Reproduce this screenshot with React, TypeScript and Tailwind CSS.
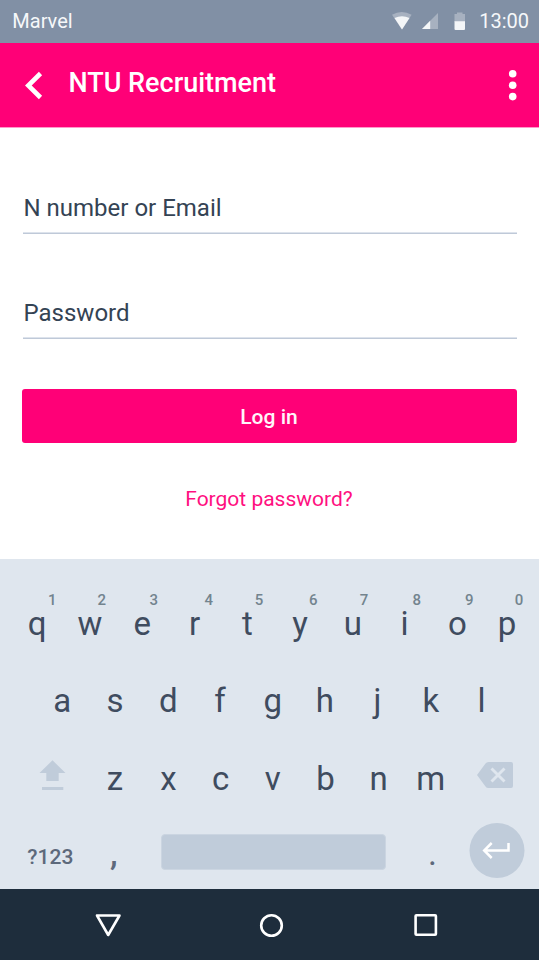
import React from "react";

type Key = [label: string, center: number];

const digits: Key[] = [["1", 52.3], ["2", 101.8], ["3", 153.7], ["4", 208.7], ["5", 259], ["6", 313.3], ["7", 364], ["8", 416.8], ["9", 469.2], ["0", 519]];
const top: Key[] = [["q", 37.2], ["w", 90], ["e", 142.2], ["r", 194.7], ["t", 247.3], ["y", 300], ["u", 353], ["i", 404.5], ["o", 457.5], ["p", 507]];
const home: Key[] = [["a", 62.3], ["s", 115], ["d", 168.3], ["f", 220], ["g", 272.7], ["h", 325], ["j", 377.5], ["k", 431], ["l", 481.5]];
const bottom: Key[] = [["z", 115], ["x", 168.5], ["c", 220.7], ["v", 272.7], ["b", 325.5], ["n", 378.5], ["m", 430.7]];

function Keys({ keys, start = 0, className }: { keys: Key[]; start?: number; className: string }) {
  return (
    <div className={`flex ${className}`}>
      {keys.map(([label, center], i) => (
        <span
          key={label}
          className="flex w-0 justify-center"
          style={{ marginLeft: center - (i ? keys[i - 1][1] : start) }}
        >
          {label}
        </span>
      ))}
    </div>
  );
}

function StatusBar() {
  return (
    <div className="flex h-[43px] items-center bg-[#8190a5] pr-[10px] pl-[12.300px] text-[20px] leading-[43px] text-[#f6f8fa]">
      <span className="flex-1">Marvel</span>
      <svg className="h-[43px] w-[88px]" viewBox="391 0 88 43">
        <path d="M392 14.8Q401.700 9 411.600 14.800L402 29.500Z" fill="#a7b1c0" />
        <path d="M394.500 18Q402 14.500 409.500 18L402 29.500Z" fill="#f4f6f8" />
        <path d="M422 29L438 13V29Z" fill="#a7b1c0" />
        <path d="M422 29L430.200 20.800V29Z" fill="#f4f6f8" />
        <path d="M454.500 14H457V12.500H462.500V14H465V22H454.500Z" fill="#a7b1c0" />
        <path d="M454.500 21.300H465V29Q465 30 464 30H455.500Q454.500 30 454.500 29Z" fill="#f4f6f8" />
      </svg>
      <span>13:00</span>
    </div>
  );
}

function AppBar() {
  return (
    <header className="flex h-[85px] items-start border-b border-[#ff99c9] bg-[#ff0077] text-white">
      <svg className="h-[84px] w-[68.500px]" viewBox="0 43 68.500 84">
        <path d="M40.500 73.500L28.300 85.500L40.500 97.500" fill="none" stroke="currentColor" strokeWidth="4.600" />
      </svg>
      <h1 className="mt-[20px] flex-1 text-[27px] leading-[40px] font-medium">NTU Recruitment</h1>
      <svg className="h-[84px] w-[40px]" viewBox="499 43 40 84" fill="currentColor">
        <circle cx="512.700" cy="73.700" r="3.800" />
        <circle cx="512.700" cy="85.200" r="3.800" />
        <circle cx="512.700" cy="96.600" r="3.800" />
      </svg>
    </header>
  );
}

function Field({ label }: { label: string }) {
  return (
    <div className="mr-[22px] ml-[23px] h-[54px] border-b border-[#bfc9d8] text-[#344354]">
      <div className="h-[53px] border-b border-[#dde3ec] pl-[0.500px] text-[24px] leading-[56px]">{label}</div>
    </div>
  );
}

function Keyboard() {
  return (
    <section className="h-[330px] overflow-hidden bg-[#dfe6ee] text-[#3f4c5f]">
      <Keys keys={digits} className="mt-[34px] h-[14px] text-[15px] leading-[14px] font-medium text-[#73848e]" />
      <Keys keys={top} className="mt-[-3px] h-[40px] text-[33px] leading-[40px]" />
      <Keys keys={home} className="mt-[37px] h-[40px] text-[33px] leading-[40px]" />
      <div className="mt-[38px] flex h-[40px]">
        <svg className="h-[40px] w-[80px]" viewBox="0 759 80 40" fill="#c0ccda">
          <path d="M52.500 760.300L65.500 773H58.700V781H46.300V773H39.500Z" />
          <path d="M42 787H63.300V790H42Z" />
        </svg>
        <Keys keys={bottom} start={80} className="w-[390px] text-[33px] leading-[40px]" />
        <svg className="h-[40px] w-[60px]" viewBox="470 759 60 40">
          <path d="M477 775L485.500 763.500Q486.500 762 488.500 762H511Q513 762 513 764V786Q513 788 511 788H488.500Q486.500 788 485.500 786.500Z" fill="#c0ccda" />
          <path d="M491.500 768.500L504.500 781.500M504.500 768.500L491.500 781.500" stroke="#dfe6ee" strokeWidth="2.900" />
        </svg>
      </div>
      <div className="mt-[24px] flex h-[55px] items-start text-[#5d697b]">
        <span className="mt-[18px] ml-[27.300px] w-[82.700px] text-[21px] leading-[32px] font-medium">?123</span>
        <span className="mt-[10px] w-[50.600px] text-[34px] leading-[40px] font-medium">,</span>
        <div className="mt-[11px] h-[36px] w-[225.400px] rounded-[4px] border border-[#cbd5e1] bg-[#c0ccda]" />
        <span className="mt-[10px] ml-[42px] w-[41px] text-[34px] leading-[40px]">.</span>
        <svg className="h-[55px] w-[56px]" viewBox="469 823 56 55">
          <circle cx="497" cy="850.500" r="27.500" fill="#c0ccda" />
          <path d="M508.500 843V850.500H484.500M491.700 843L484.200 850.500L491.700 858" fill="none" stroke="white" strokeWidth="2.500" />
        </svg>
      </div>
    </section>
  );
}

function NavigationBar() {
  return (
    <nav className="h-[71px] bg-[#1e2d3c]">
      <svg className="h-[71px] w-[539px]" viewBox="0 889 539 71" fill="none" stroke="white" strokeWidth="2.600">
        <path d="M97 915.500H119.500L108.200 935Z" strokeLinejoin="round" />
        <circle cx="271.500" cy="925.500" r="10.300" />
        <rect x="415.600" y="915.300" width="20.300" height="19.400" rx=".8" />
      </svg>
    </nav>
  );
}

export default function App() {
  return (
    <div className="flex h-[960px] w-[539px] flex-col overflow-hidden bg-white font-[Roboto,sans-serif]">
      <StatusBar />
      <AppBar />
      <main className="flex h-[431px] flex-col">
        <div className="mt-[52px]"><Field label="N number or Email" /></div>
        <div className="mt-[51px]"><Field label="Password" /></div>
        <button className="mt-[50px] mr-[22px] ml-[22px] h-[54px] rounded-[3px] bg-[#ff0077] pr-px text-[21px] leading-[56px] font-medium text-[#fff5fa]">Log in</button>
        <a className="mt-[41px] pr-px text-center text-[21px] leading-[30px] text-[#ff0f7f]">Forgot password?</a>
      </main>
      <Keyboard />
      <NavigationBar />
    </div>
  );
}
